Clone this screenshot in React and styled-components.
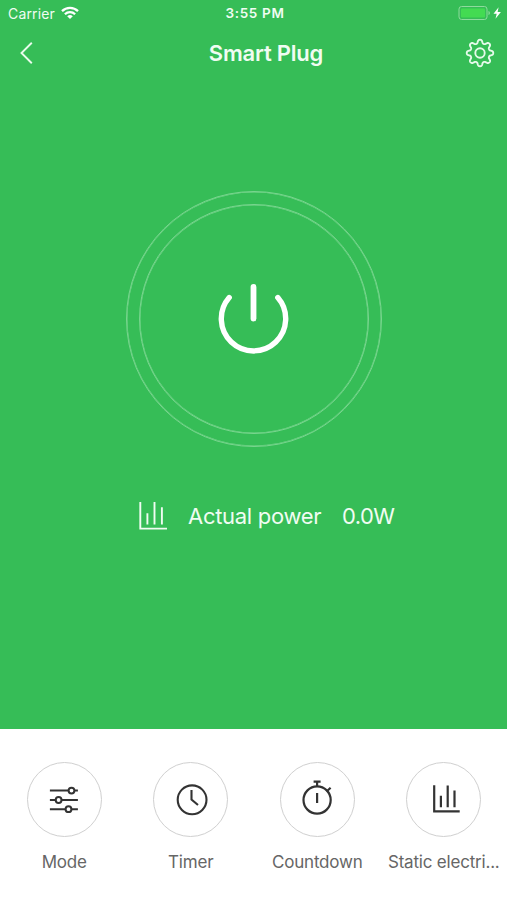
import styled, { createGlobalStyle } from "styled-components";

const gearPath = () => {
  const points = [];
  for (let i = 0; i < 240; i++) {
    const a = (i / 240) * Math.PI * 2;
    const r = 11.5 + 1.9 * Math.tanh(1.5 * Math.cos(8 * a));
    points.push(`${(15 + r * Math.sin(a)).toFixed(2)} ${(15 - r * Math.cos(a)).toFixed(2)}`);
  }
  return `M${points.join("L")}Z`;
};

const WifiIcon = () => (
  <svg width="18" height="14" viewBox="0 0 18 14" fill="none" stroke="#fff" strokeWidth="2.3">
    <path d="M1 5.1a11.5 11.5 0 0 1 16 0" />
    <path d="M3.9 8.2a7.3 7.3 0 0 1 10.2 0" />
    <path d="M9 13L6.2 10.3a4 4 0 0 1 5.6 0Z" fill="#fff" stroke="none" />
  </svg>
);

const BatteryIcon = () => (
  <svg width="44" height="16" viewBox="0 0 44 16" fill="none">
    <rect x="1" y="1.5" width="28" height="13" rx="2.6" stroke="#8edb9d" />
    <rect x="3" y="3.5" width="24" height="9" rx="1.2" fill="#43db52" />
    <path d="M30.5 6v4c1.8-.5 1.8-3.5 0-4Z" fill="#8edb9d" />
    <path d="M40.6 2.3L35.5 8.7h3.2l-1.2 5 5.4-6.8h-3.3Z" fill="#fff" />
  </svg>
);

const BackIcon = () => (
  <svg width="14" height="24" viewBox="0 0 14 24" fill="none" stroke="#e9fbec" strokeWidth="1.9">
    <path d="M12.8 1.8L2.5 12l10.3 10.2" />
  </svg>
);

const GearIcon = () => (
  <svg width="30" height="30" viewBox="0 0 30 30" fill="none" stroke="#e5faea">
    <path d={gearPath()} strokeWidth="1.9" strokeLinejoin="round" />
    <circle cx="15" cy="15" r="4.7" strokeWidth="1.9" />
  </svg>
);

const PowerIcon = () => (
  <svg width="80" height="80" viewBox="0 0 80 80" fill="none" stroke="#fff" strokeLinecap="round">
    <path d="M39.5 8v31.5" strokeWidth="5.8" />
    <path d="M15.2 18.6a32.2 32.2 0 1 0 48.6 0" strokeWidth="5.4" />
  </svg>
);

const ChartIcon = ({ size, stroke }) => (
  <svg width={size} height={size} viewBox="0 0 28 28" fill="none" stroke="currentColor" strokeWidth={stroke}>
    <path d="M1.3 0v26.6H28" />
    <path d="M8.4 11.3v11.2M15.5 0v22.5M22.9 5.3v17.2" />
  </svg>
);

const ModeIcon = () => (
  <svg width="40" height="40" viewBox="0 0 40 40" fill="#fff" stroke="#333" strokeWidth="2">
    <path d="M5.9 11.6h28M5.9 21h28M5.9 30.2h28" />
    <circle cx="27.5" cy="11.6" r="2.9" />
    <circle cx="14.6" cy="21" r="2.9" />
    <circle cx="24.5" cy="30.2" r="2.9" />
  </svg>
);

const TimerIcon = () => (
  <svg width="40" height="40" viewBox="0 0 40 40" fill="none" stroke="#333" strokeWidth="2.1">
    <circle cx="21.1" cy="20.8" r="14.4" />
    <path d="M20.5 11v9.5l6.5 5.5" />
  </svg>
);

const CountdownIcon = () => (
  <svg width="40" height="40" viewBox="0 0 40 40" fill="none" stroke="#333" strokeWidth="2.2">
    <circle cx="20.1" cy="21" r="13.6" />
    <path d="M16.6 2.6h7M20.1 2.6v5M29.6 12.5l4-3.8M20.1 14v10" />
  </svg>
);

const StaticIcon = () => (
  <svg width="40" height="40" viewBox="0 0 40 40" fill="none" stroke="#333" strokeWidth="2.2">
    <path d="M10.2 6.3v26h25.5" />
    <path d="M16.9 16.8v11.4M23.7 6.5v21.7M30.5 11.5v16.7" />
  </svg>
);

const actions = [
  { label: "Mode", Icon: ModeIcon },
  { label: "Timer", Icon: TimerIcon },
  { label: "Countdown", Icon: CountdownIcon },
  { label: "Static electri...", Icon: StaticIcon },
];

const App = () => {
  return (
    <>
      <GlobalStyle />
      <Screen>
        <StatusBar>
          <Carrier>
            <span>Carrier</span>
            <WifiIcon />
          </Carrier>
          <Clock>3:55 PM</Clock>
          <Battery>
            <BatteryIcon />
          </Battery>
        </StatusBar>
        <NavBar>
          <NavButton aria-label="Back">
            <BackIcon />
          </NavButton>
          <Title>Smart Plug</Title>
          <NavButton $end aria-label="Settings">
            <GearIcon />
          </NavButton>
        </NavBar>
        <Main>
          <OuterRing>
            <PowerButton aria-label="Power">
              <PowerIcon />
            </PowerButton>
          </OuterRing>
          <PowerRow>
            <ChartIcon size={28} stroke={1.9} />
            <PowerLabel>Actual power</PowerLabel>
            <PowerValue>0.0W</PowerValue>
          </PowerRow>
        </Main>
        <ActionBar>
          {actions.map(({ label, Icon }) => (
            <Action key={label}>
              <ActionCircle>
                <Icon />
              </ActionCircle>
              <ActionLabel>{label}</ActionLabel>
            </Action>
          ))}
        </ActionBar>
      </Screen>
    </>
  );
};

const GlobalStyle = createGlobalStyle`
  * {
    box-sizing: border-box;
  }

  body {
    margin: 0;
    font-family: Inter, "Liberation Sans", sans-serif;
  }

  svg {
    display: block;
    flex-shrink: 0;
  }

  button {
    margin: 0;
    padding: 0;
    border: none;
    background: none;
    font: inherit;
    cursor: pointer;
  }
`;

const Screen = styled.div`
  display: flex;
  flex-direction: column;
  width: 507px;
  height: 900px;
  overflow: hidden;
  background-color: #36bd57;
  color: #f0fcf2;
`;

const StatusBar = styled.header`
  display: grid;
  grid-template-columns: 1fr auto 1fr;
  align-items: center;
  height: 26px;
  padding: 0 5px 0 8px;
  font-size: 14px;
`;

const Carrier = styled.div`
  display: flex;
  align-items: center;
  gap: 6px;
  letter-spacing: 0.15px;
`;

const Clock = styled.span`
  font-size: 13.5px;
  font-weight: 600;
  letter-spacing: 0.65px;
`;

const Battery = styled.div`
  justify-self: end;
`;

const NavBar = styled.nav`
  display: grid;
  grid-template-columns: 80px 1fr 80px;
  align-items: center;
  height: 54px;
  padding: 0 12px 0 19px;
`;

const NavButton = styled.button`
  justify-self: ${({ $end }) => ($end ? "end" : "start")};
`;

const Title = styled.h1`
  margin: 0 0 0 18px;
  justify-self: center;
  font-size: 22px;
  font-weight: 600;
  line-height: 28px;
  letter-spacing: -0.2px;
  white-space: nowrap;
`;

const Main = styled.main`
  display: flex;
  flex: 1;
  flex-direction: column;
  align-items: center;
  padding-top: 111px;
`;

const OuterRing = styled.div`
  display: flex;
  align-items: center;
  justify-content: center;
  width: 256px;
  height: 256px;
  border: 1px solid #79d68f;
  border-radius: 50%;
  box-shadow: inset 0 0 0 0.5px #79d68f;
`;

const PowerButton = styled.button`
  display: flex;
  align-items: center;
  justify-content: center;
  width: 230px;
  height: 230px;

  && {
    border: 1px solid #79d68f;
    border-radius: 50%;
    box-shadow: inset 0 0 0 0.5px #79d68f;
  }
`;

const PowerRow = styled.div`
  display: flex;
  align-items: center;
  align-self: flex-start;
  height: 30px;
  margin: 54px 0 0 139px;
  font-size: 22px;
  letter-spacing: -0.3px;
  white-space: nowrap;
`;

const PowerLabel = styled.span`
  width: 154px;
  margin-left: 21px;
`;

const PowerValue = styled.span`
  letter-spacing: -0.6px;
`;

const ActionBar = styled.footer`
  display: grid;
  grid-template-columns: repeat(4, 1fr);
  height: 171px;
  padding: 32.5px 0 0 1px;
  background-color: #fff;
`;

const Action = styled.div`
  display: flex;
  flex-direction: column;
  align-items: center;
`;

const ActionCircle = styled.button`
  display: flex;
  align-items: center;
  justify-content: center;
  width: 75px;
  height: 75px;
  padding-bottom: 1px;

  && {
    border: 1px solid #d0d0d0;
    border-radius: 50%;
  }
`;

const ActionLabel = styled.span`
  margin-top: 13.5px;
  color: #666;
  font-size: 17px;
  line-height: 24px;
  letter-spacing: -0.2px;
  white-space: nowrap;
`;

export default App;
